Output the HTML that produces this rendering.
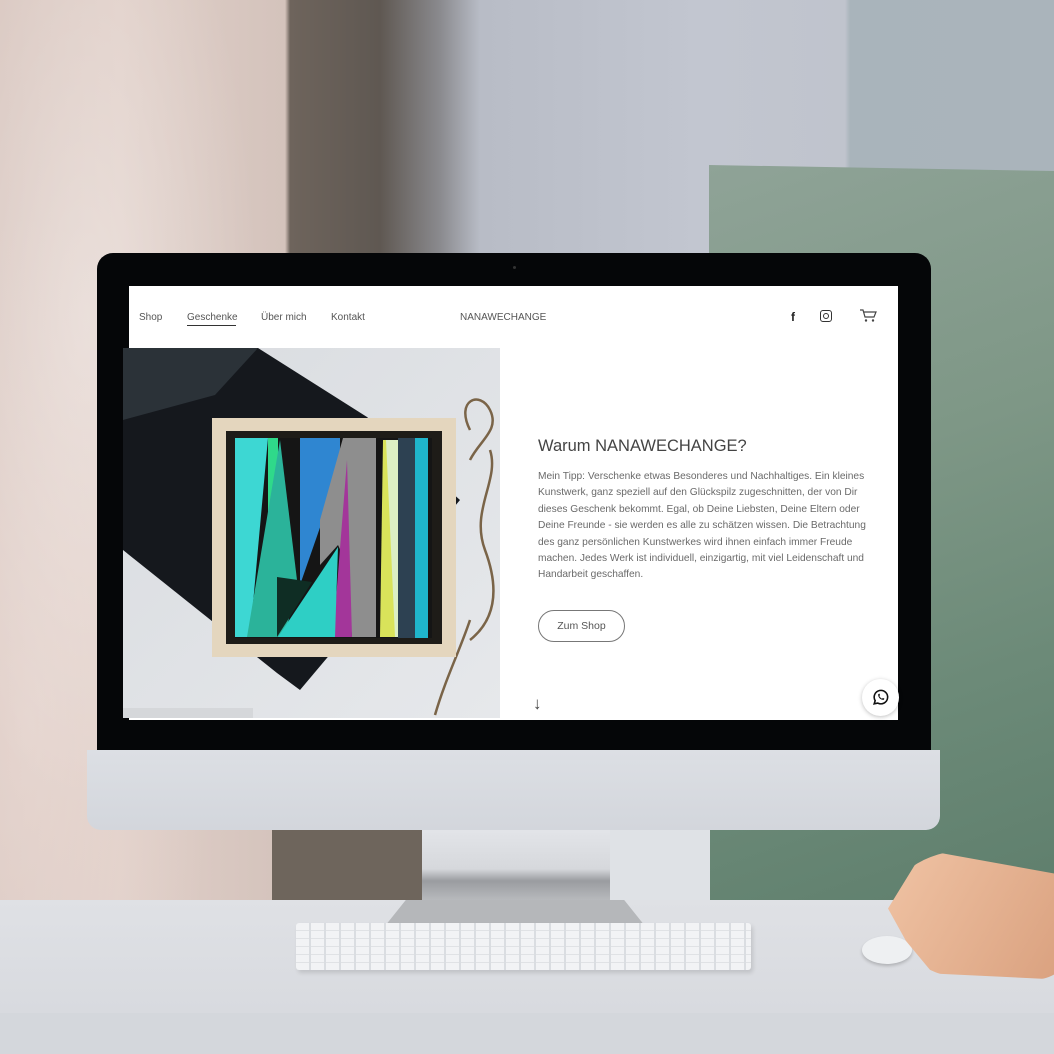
<!DOCTYPE html>
<html><head><meta charset="utf-8"><style>
*{margin:0;padding:0;box-sizing:border-box}
body{width:1054px;height:1054px;overflow:hidden;position:relative;font-family:"Liberation Sans",sans-serif;background:#c8ccd4}
.a{position:absolute}
.t{position:absolute;font-size:10px;color:#555;white-space:nowrap}
</style></head><body>
<!-- wall -->
<div class="a" style="left:0;top:0;width:1054px;height:905px;background:linear-gradient(90deg,#d9c7c0 0,#e0cfc8 120px,#d4c3bc 285px,#6e645c 290px,#5f5852 380px,#8a8a8e 440px,#b8bcc6 480px,#c2c6d0 700px,#c0c4cd 845px,#a9b4bb 850px,#aab4bb 1054px)"></div>
<div class="a" style="left:0;top:0;width:290px;height:905px;background:radial-gradient(ellipse at 30% 35%,rgba(255,255,255,.35),transparent 60%),radial-gradient(ellipse at 10% 80%,rgba(240,225,220,.5),transparent 50%)"></div>
<div class="a" style="left:709px;top:165px;width:345px;height:740px;background:linear-gradient(160deg,#8fa397 0,#7e9786 40%,#6c8a78 70%,#5e7e6c 100%);transform:skewY(1deg);transform-origin:0 0"></div>
<div class="a" style="left:272px;top:820px;width:155px;height:85px;background:#6e655c"></div>
<div class="a" style="left:600px;top:820px;width:110px;height:85px;background:#dfe2e6"></div>
<!-- desk -->
<div class="a" style="left:0;top:900px;width:1054px;height:113px;background:linear-gradient(180deg,#dfe1e5,#d8dadf)"></div>
<div class="a" style="left:0;top:1013px;width:1054px;height:41px;background:#d4d7dc"></div>
<!-- stand -->
<div class="a" style="left:422px;top:825px;width:188px;height:80px;background:linear-gradient(180deg,#e4e6ea 0,#d6d8dc 55%,#9a9ca0 70%,#bfc1c4 100%)"></div>
<div class="a" style="left:385px;top:900px;width:260px;height:26px;background:#b5b7ba;clip-path:polygon(8% 0,92% 0,100% 100%,0 100%)"></div>
<!-- keyboard -->
<div class="a" style="left:296px;top:923px;width:455px;height:47px;background:#f2f3f5;border-radius:3px;box-shadow:2px 3px 4px rgba(0,0,0,.12);
background-image:repeating-linear-gradient(90deg,transparent 0,transparent 13px,#dadde1 13px,#dadde1 15px),repeating-linear-gradient(0deg,transparent 0,transparent 7px,#e0e2e5 7px,#e0e2e5 8px)"></div>
<!-- mouse + hand -->
<div class="a" style="left:862px;top:936px;width:50px;height:28px;border-radius:50%;background:#eef0f2;box-shadow:0 2px 3px rgba(0,0,0,.2)"></div>
<div class="a" style="left:888px;top:850px;width:180px;height:130px;background:linear-gradient(120deg,#f0c3a4,#d9a07e);border-radius:45% 10% 20% 50%;clip-path:polygon(20% 0,100% 20%,100% 100%,25% 95%,10% 70%,0 45%)"></div>
<!-- monitor -->
<div class="a" style="left:97px;top:253px;width:834px;height:500px;background:#050608;border-radius:16px 16px 0 0"></div>
<div class="a" style="left:513px;top:266px;width:3px;height:3px;background:#333;border-radius:50%"></div>
<div class="a" style="left:87px;top:750px;width:853px;height:80px;background:linear-gradient(180deg,#dcdfe4,#d3d6dc);border-radius:0 0 14px 14px"></div>
<!-- screen -->
<div class="a" style="left:129px;top:286px;width:769px;height:434px;background:#fff"></div>
<div class="t" style="left:139px;top:312px">Shop</div>
<div class="t" style="left:187px;top:312px">Geschenke</div>
<div class="a" style="left:187px;top:325px;width:49px;height:1px;background:#333"></div>
<div class="t" style="left:261px;top:312px">Über mich</div>
<div class="t" style="left:331px;top:312px">Kontakt</div>
<div class="t" style="left:460px;top:312px">NANAWECHANGE</div>
<div class="t" style="left:791px;top:310px;font-size:12px;font-weight:bold;color:#222">f</div>
<div class="a" style="left:820px;top:310px;width:12px;height:12px;border:1.5px solid #333;border-radius:3px"></div>
<div class="a" style="left:823px;top:313px;width:6px;height:6px;border:1.3px solid #333;border-radius:50%"></div>
<svg class="a" style="left:859px;top:309px" width="18" height="14" viewBox="0 0 18 14"><path d="M1 1h3l2 7h9l2-5H5" fill="none" stroke="#444" stroke-width="1.2"/><circle cx="7" cy="11.5" r="1.2" fill="#444"/><circle cx="14" cy="11.5" r="1.2" fill="#444"/></svg>
<div class="t" style="left:538px;top:437px;font-size:16.5px;color:#444">Warum NANAWECHANGE?</div>
<div class="a" style="left:538px;top:469px;width:335px;font-size:10.2px;line-height:16.4px;color:#6a6a6a">Mein Tipp: Verschenke etwas Besonderes und Nachhaltiges. Ein kleines Kunstwerk, ganz speziell auf den Glückspilz zugeschnitten, der von Dir dieses Geschenk bekommt. Egal, ob Deine Liebsten, Deine Eltern oder Deine Freunde - sie werden es alle zu schätzen wissen. Die Betrachtung des ganz persönlichen Kunstwerkes wird ihnen einfach immer Freude machen. Jedes Werk ist individuell, einzigartig, mit viel Leidenschaft und Handarbeit geschaffen.</div>
<div class="a" style="left:538px;top:610px;width:87px;height:32px;border:1px solid #777;border-radius:16px;font-size:10.5px;color:#555;text-align:center;line-height:30px">Zum Shop</div>
<div class="t" style="left:533px;top:694px;font-size:17px;color:#444">↓</div>
<div class="a" style="left:862px;top:679px;width:37px;height:37px;border-radius:50%;background:#fff;box-shadow:0 1px 4px rgba(0,0,0,.25)"></div>
<svg class="a" style="left:871px;top:688px" width="19" height="19" viewBox="0 0 24 24"><path d="M4 20l1.3-4A8.5 8.5 0 1 1 8.5 19z" fill="none" stroke="#111" stroke-width="2"/><path d="M9 8c0 4 3 7 7 7l1-1.5-2-1-1 1c-1.5-.5-3-2-3.5-3.5l1-1-1-2z" fill="#111"/></svg>
<!-- image -->
<svg class="a" style="left:123px;top:348px" width="377" height="370" viewBox="123 348 377 370">
<defs><linearGradient id="bg" x1="0" y1="0" x2="1" y2="1"><stop offset="0" stop-color="#d9dce0"/><stop offset="1" stop-color="#e6e8eb"/></linearGradient></defs>
<rect x="123" y="348" width="377" height="370" fill="url(#bg)"/>
<polygon points="123,348 258,348 367,417 460,500 300,690 277,673 123,550" fill="#15181d"/>
<polygon points="123,348 258,348 215,395 123,420" fill="#2b3238"/>
<path d="M470 430c-15-30 10-40 20-20s-10 30-20 50M490 450c10 30-20 60-5 100s10 70-15 90M470 620c-10 30-25 60-35 95" fill="none" stroke="#7a6448" stroke-width="2.5"/>
<rect x="212" y="418" width="244" height="239" fill="#e4d6be"/>
<rect x="226" y="431" width="216" height="213" fill="#1e1c18"/>
<rect x="235" y="438" width="197" height="200" fill="#151515"/>
<polygon points="235,438 268,438 250,637 235,637" fill="#3dd7d3"/>
<polygon points="268,438 278,438 278,637 268,637" fill="#2fd98a"/>
<polygon points="247,637 280,440 297,580 285,637" fill="#2bb39a"/>
<polygon points="300,438 340,438 340,470 300,585" fill="#2f86d1"/>
<polygon points="343,438 376,438 376,637 352,637 345,560 338,545 320,565 320,520" fill="#8e8e8e"/>
<polygon points="347,460 352,637 333,637" fill="#a3369a"/>
<polygon points="278,637 338,547 335,637" fill="#2ecfc5"/>
<polygon points="277,577 312,582 277,637" fill="#0f2d24"/>
<polygon points="383,440 398,440 410,637 380,637" fill="#d9e35a"/>
<polygon points="386,440 398,440 410,637 395,637" fill="#dcefc4"/>
<rect x="398" y="438" width="17" height="200" fill="#2d4152"/>
<rect x="415" y="438" width="13" height="200" fill="#1fb5cc"/>
<rect x="123" y="708" width="130" height="10" fill="#d5d7da"/>
</svg>
</body></html>
